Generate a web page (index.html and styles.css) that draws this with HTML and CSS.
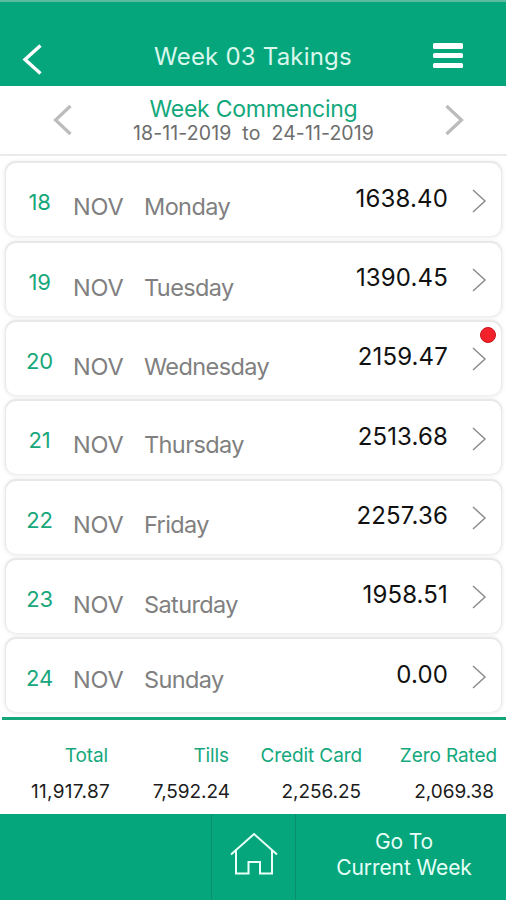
FILE: index.html
```
<!DOCTYPE html>
<html lang="en">
<head>
    <meta charset="UTF-8">
    <meta name="viewport" content="width=device-width, initial-scale=1.0">
    <title>Week 03 Takings</title>
    <link rel="stylesheet" href="styles.css">
</head>
<body>
    <header class="topbar">
        <svg class="back" width="22" height="34" viewBox="0 0 22 34"><path d="M20.5 3.5 L5 17.5 L20.5 31.5" /></svg>
        <h1>Week 03 Takings</h1>
        <div class="menu"><i></i><i></i><i></i></div>
    </header>
    <section class="week">
        <svg class="arrow" width="20" height="32" viewBox="0 0 20 32"><path d="M18.5 2 L3.5 16 L18.5 30" /></svg>
        <div class="range">
            <h2>Week Commencing</h2>
            <p><span>18-11-2019</span><span>to</span><span>24-11-2019</span></p>
        </div>
        <svg class="arrow" width="20" height="32" viewBox="0 0 20 32"><path d="M2.5 2 L17.5 16 L2.5 30" /></svg>
    </section>
    <main class="days">
        <div class="day"><b>18</b><span class="month">NOV</span><span class="name">Monday</span><span class="amount">1638.40</span><svg class="go" width="15" height="24" viewBox="0 0 15 24"><path d="M1 1 L13 12 L1 23" /></svg></div>
        <div class="day low"><b>19</b><span class="month">NOV</span><span class="name">Tuesday</span><span class="amount">1390.45</span><svg class="go" width="15" height="24" viewBox="0 0 15 24"><path d="M1 1 L13 12 L1 23" /></svg></div>
        <div class="day low"><b>20</b><span class="month">NOV</span><span class="name">Wednesday</span><span class="amount">2159.47</span><svg class="go" width="15" height="24" viewBox="0 0 15 24"><path d="M1 1 L13 12 L1 23" /></svg><i class="alert"></i></div>
        <div class="day"><b>21</b><span class="month">NOV</span><span class="name">Thursday</span><span class="amount">2513.68</span><svg class="go" width="15" height="24" viewBox="0 0 15 24"><path d="M1 1 L13 12 L1 23" /></svg></div>
        <div class="day"><b>22</b><span class="month">NOV</span><span class="name">Friday</span><span class="amount">2257.36</span><svg class="go" width="15" height="24" viewBox="0 0 15 24"><path d="M1 1 L13 12 L1 23" /></svg></div>
        <div class="day low"><b>23</b><span class="month">NOV</span><span class="name">Saturday</span><span class="amount">1958.51</span><svg class="go" width="15" height="24" viewBox="0 0 15 24"><path d="M1 1 L13 12 L1 23" /></svg></div>
        <div class="day high"><b>24</b><span class="month">NOV</span><span class="name">Sunday</span><span class="amount">0.00</span><svg class="go" width="15" height="24" viewBox="0 0 15 24"><path d="M1 1 L13 12 L1 23" /></svg></div>
    </main>
    <section class="totals">
        <div class="total t1"><h3>Total</h3><p>11,917.87</p></div>
        <div class="total t2"><h3>Tills</h3><p>7,592.24</p></div>
        <div class="total t3"><h3>Credit Card</h3><p>2,256.25</p></div>
        <div class="total t4"><h3>Zero Rated</h3><p>2,069.38</p></div>
    </section>
    <footer class="bottombar">
        <div class="blank"></div>
        <div class="home">
            <svg width="50" height="46" viewBox="0 0 50 46"><path d="M2 23.5 L25 3 L48 23.5 M7 19.5 V42.5 H19.5 V31 H31 V42.5 H43 V19.5" /></svg>
        </div>
        <div class="current"><span class="l1">Go To</span><span class="l2">Current Week</span></div>
    </footer>
</body>
</html>
```
FILE: styles.css
```
* {
    box-sizing: border-box;
}
body {
    margin: 0;
    width: 507px;
    height: 900px;
    overflow: hidden;
    background: #fff;
    font-family: Inter, "Liberation Sans", sans-serif;
}
h1, h2, h3, p {
    margin: 0;
    font-weight: 400;
    white-space: nowrap;
}
svg {
    display: block;
    fill: none;
    flex: none;
}

.topbar {
    display: flex;
    width: 506px;
    height: 86px;
    padding: 40px 43px 0 20px;
    justify-content: space-between;
    background: #05a67b;
    border-top: 2px solid #5cbc9f;
}
.topbar h1 {
    margin-left: 31px;
    font-size: 24px;
    line-height: 30px;
    letter-spacing: 0.2px;
    color: #d9f7ec;
}
.back {
    stroke: #fff;
    stroke-width: 3.4;
}
.menu {
    width: 30px;
    padding-top: 1px;
}
.menu i {
    display: block;
    height: 5.5px;
    margin-bottom: 4.3px;
    border-radius: 1.5px;
    background: #fff;
}

.week {
    display: flex;
    height: 70px;
    padding: 8px 43px 0 52px;
    justify-content: space-between;
    border-bottom: 2px solid #ebebeb;
}
.arrow {
    margin-top: 10px;
    stroke: #bcbcbc;
    stroke-width: 3.2;
}
.range {
    margin-right: 9px;
    text-align: center;
}
.range h2 {
    font-size: 23px;
    line-height: 30px;
    letter-spacing: -0.25px;
    color: #12a87c;
}
.range p {
    display: flex;
    justify-content: center;
    gap: 11px;
    font-size: 19.5px;
    line-height: 18px;
    letter-spacing: 0.1px;
    color: #6d6d6d;
}

.days {
    display: grid;
    grid-auto-rows: 73px;
    row-gap: 6.33px;
    padding: 7.4px 6px 0;
}
.day {
    position: relative;
    display: grid;
    grid-template-columns: 47px 71px 1fr 110px 53px;
    align-items: start;
    padding-left: 20px;
    border-radius: 10px;
    background: #fff;
    box-shadow: 0 -1px 1px 1px #e8e8e8, 0 0 4px 1px #e6e6e6;
    font-size: 24px;
    line-height: 30px;
    color: #808080;
}
.day b {
    width: 27px;
    margin-top: 24.1px;
    font-size: 22px;
    font-weight: 400;
    text-align: center;
    letter-spacing: -0.2px;
    color: #17a77b;
}
.month, .name {
    margin-top: 28.9px;
    font-size: 23.5px;
    letter-spacing: -0.6px;
}
.month {
    letter-spacing: -0.2px;
}
.low .month, .low .name {
    margin-top: 29.9px;
}
.high .month, .high .name {
    margin-top: 25.9px;
}
.amount {
    margin-top: 20.2px;
    text-align: right;
    letter-spacing: 0.15px;
    color: #111;
}
.go {
    margin: 25.2px 0 0 24.4px;
    stroke: #8c8c8c;
    stroke-width: 1.5;
}
/* unsaved marker */
.alert {
    position: absolute;
    top: 5px;
    right: 5.5px;
    width: 16px;
    height: 16px;
    border: 1px solid #c8141a;
    border-radius: 50%;
    background: #f3222a;
}

.totals {
    display: grid;
    grid-template-columns: 106px 121px 133px 135px;
    height: 97px;
    margin: 4.6px 1px 0 2px;
    padding-top: 24px;
    border-top: 3px solid #12a679;
    text-align: right;
}
.total h3 {
    font-size: 19px;
    line-height: 24px;
    letter-spacing: -0.1px;
    color: #14a87c;
}
.total p {
    margin-top: 12px;
    font-size: 19px;
    line-height: 24px;
    letter-spacing: -0.05px;
    color: #1c1c1c;
}
.t1 p {
    margin-right: -2px;
    letter-spacing: 0.3px;
}
.t2 p {
    margin-right: -1px;
}
.t3 p {
    margin-right: 1px;
}
.t4 p {
    margin-right: 3px;
}

.bottombar {
    display: grid;
    grid-template-columns: 211px 85px 1fr;
    width: 506px;
    height: 88px;
    background: #05a67b;
}
.home {
    padding: 17px 0 0 17px;
    border-left: 1px solid #0a8f6b;
    border-right: 1px solid #0a8f6b;
}
.home svg {
    stroke: #eafff8;
    stroke-width: 2;
}
.current {
    display: flex;
    flex-direction: column;
    align-items: center;
    padding: 15px 0 0 6px;
    font-size: 21px;
    line-height: 26px;
    letter-spacing: -0.1px;
    color: #e6fff7;
}
```
